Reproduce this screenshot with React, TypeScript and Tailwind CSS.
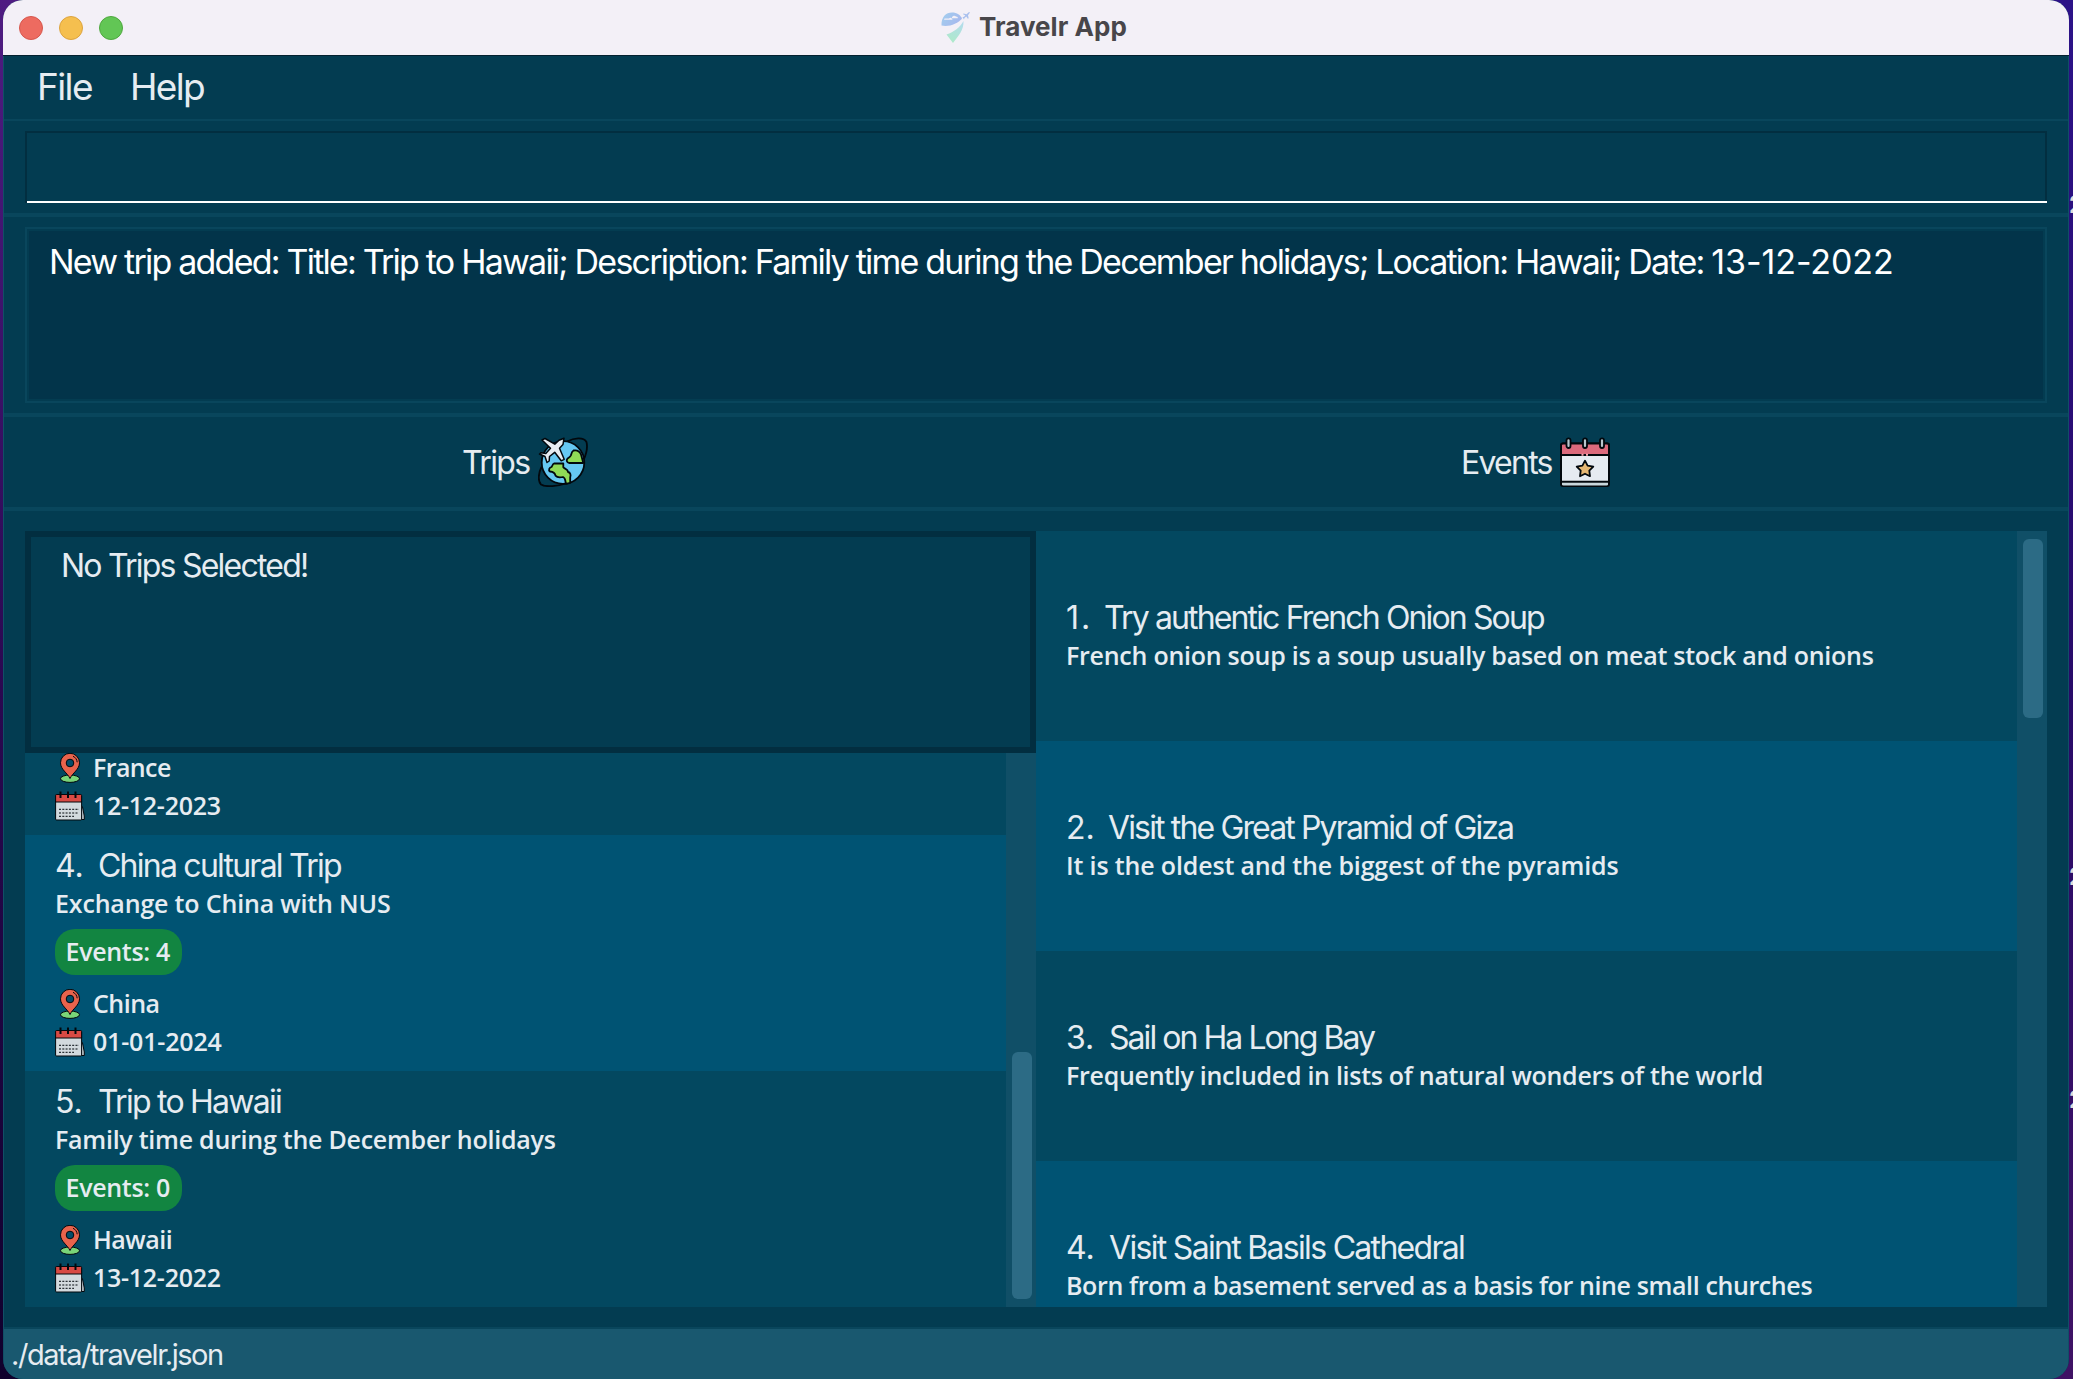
import React from 'react'

const SANS = "font-['Inter','Liberation_Sans',sans-serif]"
const BODY = "font-['Open_Sans','Noto_Sans',sans-serif] text-[25px] font-[650]"

function TravelrLogo() {
  return (
    <svg className="h-[33px] w-[30px] shrink-0" viewBox="0 0 30 33" fill="none">
      <defs>
        <linearGradient id="cap" x1="2" y1="3" x2="20" y2="16" gradientUnits="userSpaceOnUse">
          <stop stopColor="#a3cdee" />
          <stop offset="1" stopColor="#a6b4ee" />
        </linearGradient>
        <linearGradient id="tail" x1="20" y1="11" x2="11" y2="31" gradientUnits="userSpaceOnUse">
          <stop stopColor="#b3dcec" />
          <stop offset="1" stopColor="#aee9cb" />
        </linearGradient>
      </defs>
      <path d="M.5 14.500C0 6 5 1.500 11 1.500c5 0 8.500 2.500 10 6.200C17 12 8 16.500.5 14.500Z" fill="url(#cap)" />
      <path d="M22.500 10c.5 9-5.500 15.500-10.500 22L5.500 23.500C13 21 19 16.500 22.500 10Z" fill="url(#tail)" />
      <path d="M3.500 7.500h4.500a2 2 0 0 1 3.500 1.200h-8.500ZM11 6.300a2.500 2.500 0 0 1 4-.8c1.500 0 2 1 1.800 1.700h-6Z" fill="#f3f0f7" />
      <path d="m22.500 2.500 3 .8 2.500-2.300 1 .6-2 2.700.7 3-.9.4-1.500-2.200-1.800 1.600-.5 1.300-1.500-2.100 1.600-.5 1.200-1.500-2.300-1Z" fill="#a9c0ee" />
    </svg>
  )
}

function GlobeIcon() {
  return (
    <svg className="h-[50px] w-[50px] shrink-0" viewBox="0 0 50 50" fill="none" stroke="#02080d" strokeWidth="1.800" strokeLinejoin="round">
      <path d="M29 4.500C36 .8 45.500-.4 48.500 5c1.200 5-.2 12-3 18" />
      <path d="M3.500 30C.5 36-.5 44 3 47.500c5 3 17 1.500 25-1" />
      <circle cx="25" cy="25.500" r="21.300" fill="#66c8f2" />
      <path d="M35.500 13.500c4-.8 6.500 1.500 7.500 4l2.300 8.500H31c-2-.5-2.800-2.500-1.800-4 .8-1.300 3-1.500 3.600-3.400.5-1.800.9-4.200 2.700-5.100Z" fill="#8fdb57" />
      <path d="M16 26.500h9.300v3.800c1.500 2 4.700 1.500 4.700 4.700 2.500.5 3 3 2.200 5.300v5.500l-4.200 1c-1-3.500-.3-5.800-3-6.800-2 .5-6 .5-7.500-1.300-.5-2.700-3.500-4-5.500-4.200-2-1.500-.5-4 1.500-4.500 1-1 1-3 2.500-3.500Z" fill="#8fdb57" />
      <path d="m26 1.200-5 2-4.200 4L7 1.500 4 3l8.500 8.200-4.700 5.300-4.600-.8L1.500 17l5.500 2.500 2 6 2.200-1.500.3-4.500 5.200-4.200 6.500 8.500 3-1.500-4.700-11L25 7.500Z" fill="#e8edf2" strokeWidth="1.500" />
    </svg>
  )
}

function EventCalendarIcon() {
  return (
    <svg className="h-[50px] w-[50px] shrink-0" viewBox="0 0 50 50" stroke="#02080d" strokeWidth="2" strokeLinejoin="round">
      <rect x="1" y="6.500" width="48" height="42.500" rx="2" fill="#e6ebf1" />
      <path d="M1 18V8.500a2 2 0 0 1 2-2h44a2 2 0 0 1 2 2V18Z" fill="#dc6a7c" />
      <path d="M2 45.500h46v1.500a1.500 1.500 0 0 1-1.500 1.500h-43A1.500 1.500 0 0 1 2 47Z" fill="#c9d7dc" stroke="none" />
      <path d="M1 44.800h48" />
      <path d="M21.500 17.800h2m2.500 0h2" stroke="#f7a7b0" />
      {[8.5, 25, 42].map((x) => (
        <rect key={x} x={x - 2} y="1.300" width="4" height="9.700" rx="2" fill="#b9c6cd" strokeWidth="1.800" />
      ))}
      <path d="m25 23.700 2.600 4.900 5.700 1-4 4 .7 5.600-5-2.500-5 2.500.7-5.600-4-4 5.700-1Z" fill="#e7b873" strokeWidth="1.800" />
    </svg>
  )
}

function PinIcon() {
  return (
    <svg className="mt-[2px] h-[30px] w-[30px] shrink-0" viewBox="0 0 30 30" stroke="#02080d" strokeWidth="1" strokeLinejoin="round">
      <ellipse cx="15" cy="25.700" rx="9.500" ry="3.700" fill="#79d578" />
      <path d="M15 25.500C12.500 20 5.500 16.500 5.500 9.800a9.500 9.500 0 0 1 19 0C24.500 16.500 17.500 20 15 25.500Z" fill="#e9634c" />
      <circle cx="15" cy="10" r="3.800" fill="#034d6a" />
      <path d="M18 3.300c2.500 1 4 3.300 4.200 6" fill="none" />
    </svg>
  )
}

function CalendarIcon() {
  return (
    <svg className="mt-[2px] h-[30px] w-[30px] shrink-0" viewBox="0 0 30 30" stroke="#02080d" strokeWidth="1" strokeLinejoin="round">
      <path d="M26 14v14.500h3.300V25L27.500 16Z" fill="#b9c4c9" />
      <rect x=".6" y="4" width="26" height="25" rx="1" fill="#d3dade" />
      <path d="M.6 11V4.500a1 1 0 0 1 1-1h24a1 1 0 0 1 1 1V11Z" fill="#d84a44" />
      <path d="M5.500.5v6.500M13 .5v6.500M20.500.5v6.500" strokeWidth="2" />
      <path d="M4 18.300h20M4 22h19M4 25.300h15" strokeDasharray="2 1.300" />
    </svg>
  )
}

type Trip = {
  no: string
  title: string
  titleCls: string
  desc: string
  descCls: string
  events: string
  place: string
  placeCls: string
  date: string
  dateCls: string
}

const trips: Trip[] = [
  { no: '3.', title: 'Trip to France', titleCls: 'tracking-[-1.75px]', desc: 'Holiday in France', descCls: 'tracking-[-0.2px]', events: 'Events: 3', place: 'France', placeCls: 'tracking-[-0.6px]', date: '12-12-2023', dateCls: 'tracking-[-0.27px]' },
  { no: '4.', title: 'China cultural Trip', titleCls: 'tracking-[-1.76px]', desc: 'Exchange to China with NUS', descCls: 'tracking-[-0.17px]', events: 'Events: 4', place: 'China', placeCls: 'tracking-[-0.5px]', date: '01-01-2024', dateCls: 'tracking-[-0.18px]' },
  { no: '5.', title: 'Trip to Hawaii', titleCls: 'tracking-[-1.75px]', desc: 'Family time during the December holidays', descCls: 'tracking-[-0.25px]', events: 'Events: 0', place: 'Hawaii', placeCls: 'tracking-[-0.5px]', date: '13-12-2022', dateCls: 'tracking-[-0.27px]' },
]

const events = [
  { no: '1.', noCls: 'w-[38px] tracking-[1.9px]', title: 'Try authentic French Onion Soup', titleCls: 'tracking-[-1.86px]', desc: 'French onion soup is a soup usually based on meat stock and onions', descCls: 'tracking-[-0.255px]' },
  { no: '2.', noCls: 'w-[42px]', title: 'Visit the Great Pyramid of Giza', titleCls: 'tracking-[-1.86px]', desc: 'It is the oldest and the biggest of the pyramids', descCls: 'tracking-[-0.15px]' },
  { no: '3.', noCls: 'w-[43px]', title: 'Sail on Ha Long Bay', titleCls: 'tracking-[-1.95px]', desc: 'Frequently included in lists of natural wonders of the world', descCls: 'tracking-[-0.285px]' },
  { no: '4.', noCls: 'w-[43px]', title: 'Visit Saint Basils Cathedral', titleCls: 'tracking-[-1.69px]', desc: 'Born from a basement served as a basis for nine small churches', descCls: 'tracking-[-0.38px]' },
]

function TripRow({ trip }: { trip: Trip }) {
  return (
    <div className="h-[236px] shrink-0 pl-[30px] pt-[11px] odd:bg-[#034860] even:bg-[#005373]">
      <div className={`flex text-[32px] leading-[40px] ${SANS}`}>
        <span className="w-[43px]">{trip.no}</span>
        <span className={trip.titleCls}>{trip.title}</span>
      </div>
      <div className={`-mt-px leading-[36px] ${BODY} ${trip.descCls}`}>{trip.desc}</div>
      <div className={`mt-2 flex h-[46px] w-[127px] items-center rounded-[20px] bg-[#128541] pl-[10.500px] tracking-[-0.32px] ${BODY}`}>
        {trip.events}
      </div>
      <div className={`mt-[9px] flex h-[38px] items-center gap-2 leading-[38px] ${BODY}`}>
        <PinIcon />
        <span className={trip.placeCls}>{trip.place}</span>
      </div>
      <div className={`flex h-[38px] items-center gap-2 leading-[38px] ${BODY}`}>
        <CalendarIcon />
        <span className={trip.dateCls}>{trip.date}</span>
      </div>
    </div>
  )
}

export default function App() {
  return (
    <div className="relative flex h-[1379px] w-[2073px] overflow-hidden bg-[linear-gradient(to_bottom,#4f1c82,#2a0850_50%,#10002c)] pl-[3px]">
      <div className="absolute inset-y-0 right-0 w-10 bg-[linear-gradient(to_bottom,#2c1288,#280a68_50%,#3f1264)]" />
      {['top-[190px]', 'top-[862px]', 'top-[1085px]'].map((top) => (
        <div key={top} className={`absolute left-[2069px] w-1 overflow-hidden text-[24px] font-bold leading-[30px] text-[#dcdcdc] ${top} ${SANS}`}>
          2
        </div>
      ))}

      <div className={`relative flex h-[1379px] w-[2066px] flex-col overflow-hidden rounded-[20px] bg-[#033c51] text-[#e6ecf1] ${SANS}`}>
        <header className="flex h-[56px] shrink-0 items-center border-b border-[#04202f] bg-[#f3f0f7]">
          <div className="flex w-[938px] gap-4 pl-4">
            <span className="size-6 rounded-full border border-[#d6574d] bg-[#ed6b60]" />
            <span className="size-6 rounded-full border border-[#dca33f] bg-[#f5bf4f]" />
            <span className="size-6 rounded-full border border-[#4fa73f] bg-[#62c655]" />
          </div>
          <TravelrLogo />
          <h1 className="pb-[2px] pl-[8px] text-[26px] font-bold leading-8 tracking-[0.05px] text-[#48464a]">Travelr App</h1>
        </header>

        <div className="flex min-h-0 flex-1 flex-col border-x border-[#114f66]">
          <nav className="flex h-[63px] shrink-0 pl-[33px] pt-[6.500px] text-[37px] leading-[48px]">
            <span className="w-[93px] tracking-[-1.6px]">File</span>
            <span className="tracking-[-1.68px]">Help</span>
          </nav>

          <section className="h-[96px] shrink-0 border-y-2 border-[#09465c] px-[21px] pt-[10px]">
            <div className="h-[72px] border-l-2 border-[#022e40]">
              <div className="flex h-full flex-col border-b-2 border-white">
                <div className="flex-1 border-r-2 border-t-2 border-[#022e40]" />
              </div>
            </div>
          </section>

          <section className="h-[200px] shrink-0 border-y-2 border-[#09465c] px-[21px] pt-[10px]">
            <div className="h-[176px] border-2 border-[#09465c] bg-[#033c51] p-[2px]">
              <div className="h-full bg-[#02344a] pl-[20px] pt-[7.500px] text-[34px] leading-[46px] tracking-[-1.78px] whitespace-nowrap text-white">
                New trip added: Title: Trip to Hawaii; Description: Family time during the December holidays; Location: Hawaii; Date:{' '}
                <span className="tracking-[-0.08px]">13-12-2022</span>
              </div>
            </div>
          </section>

          <section className="flex h-[94px] shrink-0 items-center border-y-2 border-[#09465c] text-[32px] leading-[40px]">
            <div className="flex w-[998px] items-center pl-[458px]">
              <h2 className="w-[76px] pt-[2px] tracking-[-1.6px]">Trips</h2>
              <GlobeIcon />
            </div>
            <div className="flex items-center pl-[459px]">
              <h2 className="w-[99px] pt-[2px] tracking-[-1.75px]">Events</h2>
              <EventCalendarIcon />
            </div>
          </section>

          <main className="flex h-[820px] shrink-0 border-y-2 border-[#09465c] px-[21px] py-[20px]">
            <div className="flex w-[1011px] flex-col">
              <div className="h-[222px] shrink-0 border-[6px] border-[#022e40] pl-[30px] pt-[9px] text-[32px] leading-[40px] tracking-[-1.777px]">
                No Trips Selected!
              </div>
              <div className="flex min-h-0 flex-1">
                <div className="flex min-w-0 flex-1 flex-col justify-end overflow-hidden">
                  {trips.map((t) => (
                    <TripRow key={t.no} trip={t} />
                  ))}
                </div>
                <div className="flex w-[30px] flex-col justify-end bg-[#104f67] pb-2 pl-[6px] pr-1">
                  <div className="h-[247px] rounded-md bg-[#2c6b85]" />
                </div>
              </div>
            </div>

            <div className="flex flex-1">
              <div className="flex-1 overflow-hidden">
                {events.map((e) => (
                  <div key={e.no} className="h-[210px] pl-[30px] pt-[67px] odd:bg-[#034860] even:bg-[#005373]">
                    <div className="flex text-[32px] leading-[40px]">
                      <span className={e.noCls}>{e.no}</span>
                      <span className={e.titleCls}>{e.title}</span>
                    </div>
                    <div className={`-mt-px leading-[36px] ${BODY} ${e.descCls}`}>{e.desc}</div>
                  </div>
                ))}
              </div>
              <div className="w-[30px] bg-[#104f67] pl-[6px] pr-1 pt-2">
                <div className="h-[179px] rounded-md bg-[#2c6b85]" />
              </div>
            </div>
          </main>

          <footer className="flex-1 bg-[#19586f] pl-[7px] pt-[4.500px] text-[29px] leading-[42px] tracking-[-1.462px]">./data/travelr.json</footer>
        </div>
      </div>
    </div>
  )
}
